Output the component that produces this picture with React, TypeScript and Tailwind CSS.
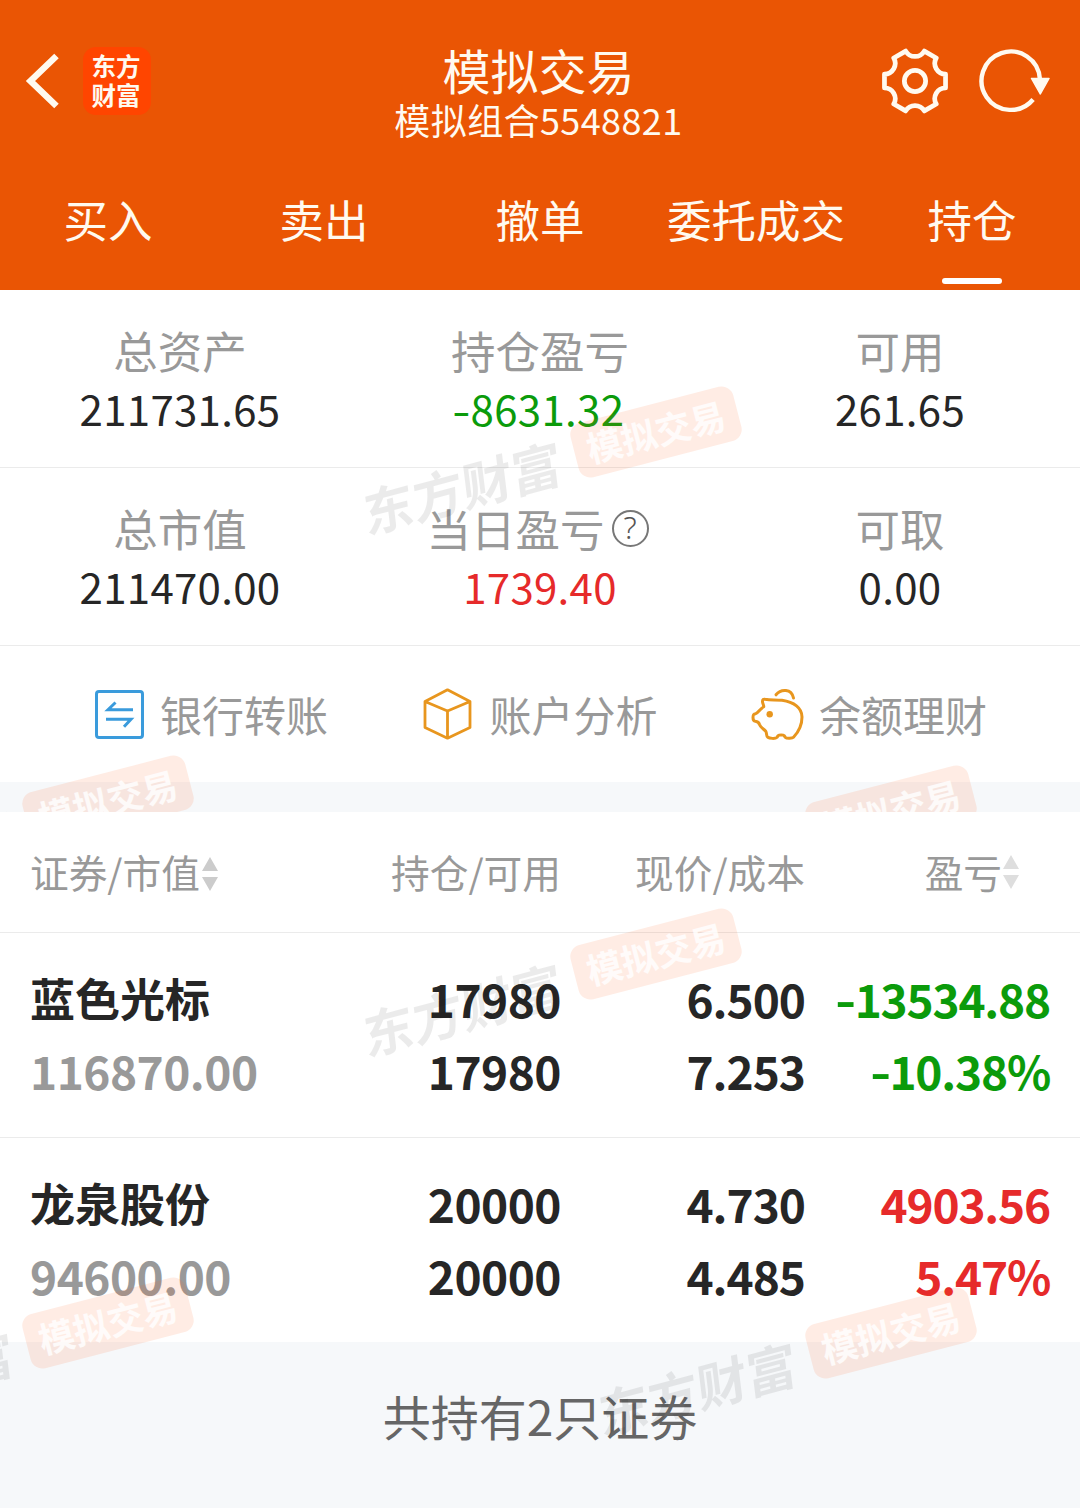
import type { ReactNode } from 'react'

type Tone = 'default' | 'up' | 'down'

interface Stat {
  label: string
  value: string
  tone?: Tone
  help?: boolean
}

interface Holding {
  name: string
  marketValue: string
  amount: string
  available: string
  price: string
  cost: string
  profit: string
  ratio: string
  tone: Tone
}

const TONE_CLASS: Record<Tone, string> = {
  default: 'text-[#262626]',
  up: 'text-[#e62a2a]',
  down: 'text-[#0b9b0b]',
}

const TABS = ['买入', '卖出', '撤单', '委托成交', '持仓']
const ACTIVE_TAB = '持仓'

const STATS: Stat[][] = [
  [
    { label: '总资产', value: '211731.65' },
    { label: '持仓盈亏', value: '-8631.32', tone: 'down' },
    { label: '可用', value: '261.65' },
  ],
  [
    { label: '总市值', value: '211470.00' },
    { label: '当日盈亏', value: '1739.40', tone: 'up', help: true },
    { label: '可取', value: '0.00' },
  ],
]

const HOLDINGS: Holding[] = [
  {
    name: '蓝色光标',
    marketValue: '116870.00',
    amount: '17980',
    available: '17980',
    price: '6.500',
    cost: '7.253',
    profit: '-13534.88',
    ratio: '-10.38%',
    tone: 'down',
  },
  {
    name: '龙泉股份',
    marketValue: '94600.00',
    amount: '20000',
    available: '20000',
    price: '4.730',
    cost: '4.485',
    profit: '4903.56',
    ratio: '5.47%',
    tone: 'up',
  },
]

export default function App() {
  return (
    <div className="flex h-[1508px] w-[1080px] flex-col overflow-hidden bg-white font-['Noto_Sans_CJK_SC',sans-serif] text-[#262626]">
      <Header />

      <section className="relative h-[522px] shrink-0 overflow-hidden">
        {STATS.map((row, i) => (
          <StatRow key={i} stats={row} />
        ))}
        <QuickActions />
        <div className="h-[30px] bg-[#f6f8fa]" />
        <Watermark className="left-[572px] top-[114px]" />
        <Watermark className="left-[24px] top-[483px]" />
        <Watermark className="left-[807px] top-[493px]" />
      </section>

      <section className="relative flex flex-1 flex-col overflow-hidden">
        <TableHead />
        {HOLDINGS.map((h, i) => (
          <HoldingRow key={h.name} holding={h} last={i === HOLDINGS.length - 1} />
        ))}
        <div className="flex-1 bg-[#f6f8fa] pt-[37px] text-center text-[48px] leading-[72px] text-[#666]">
          共持有{HOLDINGS.length}只证券
        </div>
        <Watermark className="left-[572px] top-[114px]" />
        <Watermark className="left-[24px] top-[483px]" />
        <Watermark className="left-[807px] top-[493px]" />
      </section>
    </div>
  )
}

function Header() {
  return (
    <header className="flex h-[290px] shrink-0 flex-col bg-[#ea5504] text-[#fffaf0]">
      <div className="grid h-[162px] grid-cols-[1fr_auto_1fr] items-center">
        <div className="flex items-center gap-[24px] pl-[25px]">
          <BackIcon />
          <div className="flex h-[68px] w-[68px] flex-col items-center justify-center rounded-[13px] bg-[#ff4500] pb-[2px] pr-[2px] text-[24.5px] font-bold leading-[29px]">
            <span>东方</span>
            <span>财富</span>
          </div>
        </div>
        <div className="flex flex-col items-center pr-[3px] pt-[20px]">
          <h1 className="text-[48px] leading-[56px]">模拟交易</h1>
          <p className="text-[36px] leading-[44px] tracking-[0.4px]">模拟组合5548821</p>
        </div>
        <div className="flex items-center justify-end gap-[29px] pr-[29px]">
          <GearIcon />
          <RefreshIcon />
        </div>
      </div>

      <nav className="grid h-[128px] grid-cols-5">
        {TABS.map((tab) => (
          <button key={tab} className="flex flex-col items-center pt-[27px] text-[44.5px] leading-[60px]">
            {tab}
            {tab === ACTIVE_TAB && <span className="mt-[29px] h-[6px] w-[60px] rounded-full bg-white" />}
          </button>
        ))}
      </nav>
    </header>
  )
}

function StatRow({ stats }: { stats: Stat[] }) {
  return (
    <div className="grid h-[178px] grid-cols-3 border-b border-[#ebebeb] pt-[30px] text-center leading-[60px]">
      {stats.map((s) => (
        <div key={s.label}>
          <div className="flex h-[58px] items-start justify-center gap-[7px] text-[44.5px] text-[#999]">
            {s.label}
            {s.help && (
              <span className="mr-[5px] mt-[12px] flex h-[37px] w-[37px] items-center justify-center rounded-full border-2 border-[#777] pb-[3px] font-['Noto_Sans',sans-serif] text-[31px] font-light leading-none text-[#555]">
                ?
              </span>
            )}
          </div>
          <div className={`text-[42px] tracking-[0.3px] ${TONE_CLASS[s.tone ?? 'default']}`}>
            <Signed value={s.value} />
          </div>
        </div>
      ))}
    </div>
  )
}

/** Number whose minus sign is drawn a little wider than the font's hyphen. */
function Signed({ value }: { value: string }) {
  if (!value.startsWith('-')) return <>{value}</>
  return (
    <>
      <span className="inline-block origin-right scale-x-[1.25]">-</span>
      {value.slice(1)}
    </>
  )
}

function QuickActions() {
  return (
    <div className="flex h-[136px] items-center justify-between pl-[95px] pr-[93px]">
      <QuickAction icon={<TransferIcon />} label="银行转账" />
      <QuickAction icon={<CubeIcon />} label="账户分析" />
      <QuickAction icon={<PiggyIcon />} label="余额理财" />
    </div>
  )
}

function QuickAction({ icon, label }: { icon: ReactNode; label: string }) {
  return (
    <button className="flex items-center gap-[16px] text-[42px] leading-[60px] text-[#999]">
      {icon}
      {label}
    </button>
  )
}

const COLUMNS = 'grid grid-cols-[300px_231px_244px_245px] pl-[30px] pr-[30px]'

function TableHead() {
  return (
    <div className={`${COLUMNS} h-[121px] shrink-0 items-center border-b border-[#ebebeb] pb-[2px] text-[38.7px] leading-[56px] text-[#999]`}>
      <div className="flex items-center gap-px">
        证券/市值
        <SortIcon className="mt-[6px] text-[#ccc]" />
      </div>
      <div className="text-right">持仓/可用</div>
      <div className="text-right">现价/成本</div>
      <div className="flex items-center justify-end pr-[30px]">
        盈亏
        <SortIcon className="mt-[2px] text-[#dedede]" />
      </div>
    </div>
  )
}

function HoldingRow({ holding: h, last }: { holding: Holding; last: boolean }) {
  return (
    <div
      className={`${COLUMNS} shrink-0 pt-[29px] text-[46px] font-bold leading-[72px] tracking-[-0.5px] ${
        last ? 'h-[204px]' : 'h-[205px] border-b border-[#ebebeb]'
      }`}
    >
      <div>
        <div className="text-[45px] tracking-normal">{h.name}</div>
        <div className="text-[#999]">{h.marketValue}</div>
      </div>
      <Pair top={h.amount} bottom={h.available} />
      <Pair top={h.price} bottom={h.cost} className="tracking-[-1px]" />
      <Pair top={h.profit} bottom={h.ratio} tone={h.tone} className="tracking-[-1.2px]" />
    </div>
  )
}

function Pair({ top, bottom, tone = 'default', className = '' }: { top: string; bottom: string; tone?: Tone; className?: string }) {
  return (
    <div className={`whitespace-nowrap text-right ${TONE_CLASS[tone]} ${className}`}>
      <div>
        <Signed value={top} />
      </div>
      <div>
        <Signed value={bottom} />
      </div>
    </div>
  )
}

/** Tilted brand stamp; the anchor is the top left corner of the orange badge. */
function Watermark({ className }: { className: string }) {
  return (
    <div className={`pointer-events-none absolute h-[56px] w-[168px] font-bold ${className}`} aria-hidden>
      <div className="flex h-full w-full -rotate-[14.5deg] items-center justify-center rounded-[12px] bg-[#ff6020]/12 pb-[2px] text-[35.5px] leading-none text-white/80">
        模拟交易
      </div>
      <div className="absolute -left-[214px] top-[54px] w-[208px] -rotate-[15deg] -skew-x-[8deg] whitespace-nowrap text-center text-[51px] leading-[56px] text-black/[0.08]">
        东方财富
      </div>
    </div>
  )
}

function BackIcon() {
  return (
    <svg width="34" height="56" viewBox="0 0 34 56" fill="none" stroke="currentColor" strokeWidth="6.5" aria-hidden>
      <path d="M31.5 3 5.5 28 31.5 53" />
    </svg>
  )
}

function GearIcon() {
  return (
    <svg width="66" height="66" viewBox="-0.5 -0.5 67 67" fill="none" stroke="currentColor" strokeWidth="4.8" strokeLinejoin="round" aria-hidden>
      <path d="M64 26V40A10.9 10.9 0 0 0 54.56 56.35L42.44 63.35A10.9 10.9 0 0 0 23.56 63.35L11.44 56.35A10.9 10.9 0 0 0 2 40V26A10.9 10.9 0 0 0 11.44 9.65L23.56 2.65A10.9 10.9 0 0 0 42.44 2.65L54.56 9.65A10.9 10.9 0 0 0 64 26Z" />
      <circle cx="33" cy="33" r="10.8" />
    </svg>
  )
}

function RefreshIcon() {
  return (
    <svg width="74" height="66" viewBox="0 0 74 66" fill="none" stroke="currentColor" strokeWidth="4.4" aria-hidden>
      <path d="M56.1 51.5A29.2 29.2 0 1 1 62.9 31" />
      <path d="M54.5 30.5H72L63.3 46Z" fill="currentColor" strokeWidth="1.5" strokeLinejoin="round" />
    </svg>
  )
}

function TransferIcon() {
  return (
    <svg width="49" height="49" viewBox="0 0 49 49" fill="none" stroke="#3a9bdc" strokeWidth="3" aria-hidden>
      <rect x="1.5" y="1.5" width="46" height="46" rx="2.5" />
      <path d="M38 19.7H13L20.5 12.5M11 29.3H36L29 36.8" />
    </svg>
  )
}

function CubeIcon() {
  return (
    <svg width="51" height="52" viewBox="-1 0 51 52" fill="none" stroke="#e8961e" strokeWidth="2.8" strokeLinejoin="round" aria-hidden>
      <path d="M24.5 1.8 47 13.5V39.5L24.5 50.2 2 39.5V13.5ZM2 13.5 24.5 23 47 13.5M24.5 23V50" />
    </svg>
  )
}

function PiggyIcon() {
  return (
    <svg className="overflow-visible" width="51" height="53" viewBox="1 0 51 53" fill="none" stroke="#e8961e" strokeWidth="3" strokeLinecap="round" strokeLinejoin="round" aria-hidden>
      <path d="M25 6.8C30 .6 40.5 .6 42.5 10" />
      <path d="M11.5 13.5C11.5 11.5 12.5 11 14 11.3C20 12.3 25 11.5 31 12.3C43 14 51 20 51 29C51 36 47.5 44 42.5 49.3C41.5 50.4 35.5 50.6 34.5 49.5L33 47.5C32.3 46.8 28 46.8 27.3 47.5L25.8 49.5C24.5 50.8 18.5 50.6 16.8 49.3C15 48 16 45 14.8 43.3C12.5 40.8 9.5 39.5 8.5 36.5C7.8 34 6.5 33.5 4.3 33.3C2 33 2 31.5 2 29.5C2 27 2.3 26 4.5 25.7C7.5 25 8 21.5 12.8 18.8C12.8 17 11.5 15.5 11.5 13.5Z" />
      <circle cx="18.7" cy="26.3" r="3.2" fill="#e8961e" stroke="none" />
    </svg>
  )
}

function SortIcon({ className }: { className?: string }) {
  return (
    <svg className={className} width="18" height="36" viewBox="0 0 18 36" fill="currentColor" aria-hidden>
      <path d="M9 1 17 15H1ZM9 35 1 21H17Z" />
    </svg>
  )
}
